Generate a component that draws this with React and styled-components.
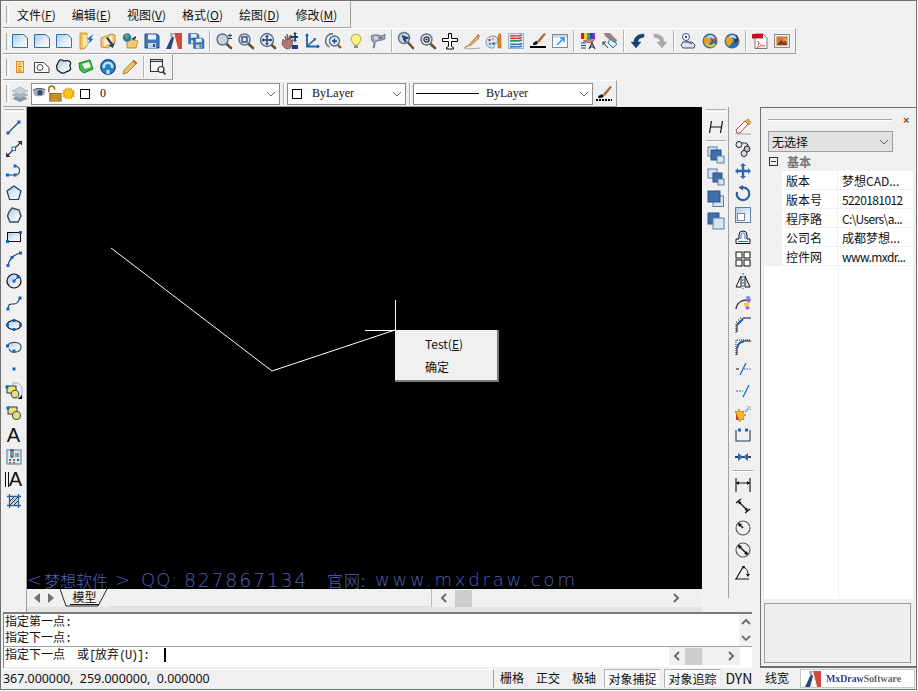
import React from 'react';
import styled, { createGlobalStyle } from 'styled-components';

const Global = createGlobalStyle`
  html, body { margin: 0; padding: 0; background: #fff; overflow: hidden; }
  * { box-sizing: border-box; }
`;
const UI = `"Noto Sans CJK SC", "Noto Sans", sans-serif`;

const Page = styled.div`
  width: 917px; height: 690px; display: flex; flex-direction: column;
  background: #f0f0f0; border: 1px solid #6f6f6f;
  font: 12px/1 ${UI}; color: #111; overflow: hidden;
`;
const Toolbar = styled.div`
  display: flex; align-items: center; width: ${p => p.$w}px; height: ${p => p.$h || 26}px;
  margin-left: 2px; padding-left: 3px;
  border-right: 1px solid #a0a0a0; border-bottom: 1px solid #a0a0a0;
  border-top: 1px solid #fff; flex: none;
`;
const Grip = styled.i`
  width: 3px; height: 17px; flex: none;
  border-left: 1px solid #a8a8a8; border-right: 1px solid #fff;
`;
const MenuItem = styled.span`
  font-size: 12px; margin-right: 16px; white-space: nowrap; &:first-of-type { margin-left: 8px; }
`;
const Btn = styled.span`
  width: 22px; height: 22px; display: flex; align-items: center; justify-content: center; flex: none;
`;
const Sep = styled.i`
  width: 2px; height: 22px; margin: 0 2px; flex: none;
  border-left: 1px solid #b4b4b4; border-right: 1px solid #fff;
`;
const ComboSep = styled(Sep)`margin: 0 2px 0 3px;`;
const Svg = styled.svg`
  width: ${p => p.$s || 16}px; height: ${p => p.$s || 16}px; display: block; overflow: visible; flex: none;
`;
const Combo = styled.div`
  width: ${p => p.$w}px; height: 22px; flex: none; display: flex; align-items: center; position: relative;
  background: #fff; border: 1px solid #8c8c8c; padding-left: 1px;
`;
const Swatch = styled.i`
  width: 10px; height: 10px; border: 1px solid #000; background: #fff; flex: none;
  margin: 0 ${p => p.$mr || 0}px 0 ${p => p.$ml || 0}px;
`;
const MonoText = styled.span`
  font: 12px "Liberation Serif", serif; color: #111;
`;
const LineSample = styled.i`width: 63px; height: 1px; background: #000; margin: 0 7px 0 1px; flex: none;`;
const ComboArrow = styled.span`position: absolute; right: 3px; top: 5px; display: flex;`;

const Body = styled.div`flex: 1; display: flex; min-height: 0;`;
const Work = styled.div`width: 757px; display: flex; flex-direction: column; flex: none;`;
const Dock = styled.div`flex: 1; display: flex; min-height: 0;`;
const LeftBar = styled.div`width: 26px; flex: none; display: flex; flex-direction: column; align-items: center; padding-top: 2px; border-right: 1px solid #a0a0a0;`;
const HGrip = styled.i`width: 20px; height: 3px; flex: none; margin-bottom: 4px; border-top: 1px solid #b0b0b0; border-bottom: 1px solid #fff;`;
const CanvasCol = styled.div`width: 675px; flex: none; display: flex; flex-direction: column;`;
const Canvas = styled.div`flex: 1; background: #000; position: relative;`;
const Draw = styled.svg`position: absolute; inset: 0; width: 100%; height: 100%;`;
const CtxMenu = styled.div`
  position: absolute; left: 368px; top: 223px; width: 104px; height: 52px; background: #f0f0f0;
  border-right: 2px solid #777; border-bottom: 2px solid #777;
  display: flex; flex-direction: column; padding: 5px 0 0 30px; gap: 5px;
`;
const CtxItem = styled.div`height: 18px; line-height: 18px; font-size: 12px;`;
const Watermark = styled.div`
  position: absolute; left: 0; bottom: 0; display: flex; color: #5060b4; height: 20px; padding-top: 2px; line-height: 18px;
  font-family: "DejaVu Sans", "Noto Sans CJK SC", sans-serif; font-weight: 200; white-space: nowrap;
`;
const WmPart = styled.span`
  width: ${p => p.$w}px; flex: none; font-size: ${p => p.$fs || 18}px; letter-spacing: ${p => p.$sp || 0}px; line-height: 18px;
  ${p => p.$cjk ? `font-family: "Noto Sans CJK SC", sans-serif; font-weight: 300;` : ''}
`;
const TabBar = styled.div`height: 18px; flex: none; display: flex; align-items: center; position: relative; background: #f0f0f0;`;
const Arrows = styled.div`display: flex; width: 33px; padding-left: 3px; flex: none;`;
const Arrow = styled.span`width: ${p => p.$w || 14}px; height: 16px; display: flex; align-items: center; justify-content: center; flex: none;`;
const Tab = styled.div`width: 49px; height: 18px; flex: none; display: flex; align-items: center; justify-content: center; position: relative;`;
const TabLabel = styled.span`font-size: 12px; border-bottom: 1px solid #111; line-height: 14px; margin-top: -1px; padding: 0 2px;`;
const TabSvg = styled.svg`position: absolute; inset: 0; width: 49px; height: 18px;`;
const HSpace = styled.div`width: 323px; height: 18px; flex: none; border-right: 1px solid #bbb; border-bottom: 1px solid #ddd;`;
const ScrollTrack = styled.div`flex: 1; display: flex; align-items: center; height: 18px;`;
const Thumb = styled.i`width: ${p => p.$w}px; height: 17px; background: #cdcdcd; flex: none;`;
const Grow = styled.i`flex: 1;`;
const Strip = styled.div`height: 5px; flex: none; background: #e3e3e3;`;
const RightDock = styled.div`width: 55px; flex: none; display: flex; border-left: 1px solid #f8f8f8;`;
const DockA = styled.div`width: 26px; flex: none; display: flex; flex-direction: column; align-items: center; padding-top: 2px; border-right: 1px solid #a0a0a0; margin-bottom: 14px;`;
const DockB = styled.div`flex: 1; display: flex; flex-direction: column; align-items: center; padding: 9px 0 0 0; margin-bottom: 14px;`;
const DockSep = styled.i`width: 20px; height: 2px; flex: none; margin: ${p => p.$m}; border-top: 1px solid #a8a8a8; border-bottom: 1px solid #fff;`;

const Cmd = styled.div`
  height: 56px; flex: none; margin-left: 2px; border-top: 2px solid #7a7a7a; border-left: 1px solid #888; background: #fff;
  display: flex; flex-direction: column; margin-right: 6px;
`;
const CmdTop = styled.div`height: 33px; display: flex; border-bottom: 1px solid #a0a0a0; flex: none;`;
const CmdLines = styled.div`flex: 1; padding-left: 1px; display: flex; flex-direction: column;`;
const CmdLine = styled.div`height: 16px; line-height: 14px; font-size: 12px; white-space: nowrap;`;
const CmdBar = styled.div`width: 13px; flex: none; background: #f0f0f0; display: flex; flex-direction: column; align-items: center;`;
const CmdBottom = styled.div`flex: 1; display: flex; min-height: 0;`;
const CmdInput = styled.div`flex: 1; display: flex; align-items: center; padding: 0 0 5px 1px; border-bottom: 1px solid #eee;`;
const Caret = styled.i`width: 2px; height: 14px; background: #000; margin-left: 15px; flex: none;`;
const Latin = styled.span`font: 12px "Liberation Mono", monospace; letter-spacing: -1.2px;`;
const CmdHScroll = styled.div`width: 71px; height: 18px; background: #f0f0f0; display: flex; align-items: center; flex: none;`;
const CmdCorner = styled.i`width: 12px; flex: none; background: #fff;`;

const Panel = styled.div`
  flex: 1; margin-left: 2px; border-left: 1px solid #6f6f6f; border-bottom: 2px solid #6f6f6f; border-top: 1px solid #6f6f6f;
  display: flex; flex-direction: column; padding: 0 5px 3px 3px; background: #f0f0f0;
`;
const PanelHead = styled.div`height: 23px; flex: none; display: flex; align-items: center; padding-left: 4px;`;
const PanelGrip = styled.i`width: 124px; height: 2px; border-top: 1px solid #a8a8a8; border-bottom: 1px solid #fff;`;
const Close = styled.span`margin-left: 11px; font: bold 11px "Liberation Sans", sans-serif; color: #7a5230;`;
const Select = styled.div`
  height: 21px; width: 125px; margin-left: 4px; flex: none; background: #e1e1e1; border: 1px solid #a0a0a0;
  display: flex; align-items: center; justify-content: space-between; padding: 0 3px; font-size: 12px;
`;
const Grid = styled.div`flex: 1; display: flex; flex-direction: column; background: #fff; margin-right: -2px;`;
const GroupRow = styled.div`height: 19px; flex: none; background: #f0f0f0; display: flex; align-items: center; padding-left: 5px;`;
const Minus = styled.i`width: 9px; height: 9px; border: 1px solid #333; margin-right: 9px; flex: none; position: relative;
  &::after { content: ''; position: absolute; left: 1px; right: 1px; top: 3px; height: 1px; background: #333; }
`;
const GroupLabel = styled.span`font-weight: 700; color: #767676; font-size: 12px;`;
const Row = styled.div`display: grid; grid-template-columns: 18px 56px 1fr; height: 19px; flex: none; border-bottom: 1px solid #f0f0f0; align-items: center;`;
const RowGutter = styled.i`height: 19px; background: #f0f0f0;`;
const Key = styled.span`padding-left: 4px; font-size: 12px; border-right: 1px solid #f0f0f0; height: 18px; line-height: 18px;`;
const Val = styled.span`padding-left: 4px; font-size: 12px; white-space: nowrap; line-height: 18px; letter-spacing: ${p => p.$tight ? -0.6 : 0}px;`;
const GridRest = styled.div`flex: 1; margin-left: 74px; border-left: 1px solid #f0f0f0;`;
const Desc = styled.div`height: 60px; flex: none; margin-top: 4px; background: #eee; border: 1px solid #9c9c9c;`;

const Status = styled.div`height: 21px; flex: none; display: flex; align-items: center; padding-left: 2px; font-size: 12px;`;
const Coord = styled.div`width: 491px; flex: none; height: 19px; font: 12.4px/18px "Noto Sans", sans-serif; border-right: 1px solid #a8a8a8; border-top: 1px solid #fff; white-space: pre;`;
const SItem = styled.div`
  width: ${p => p.$w}px; height: 19px; flex: none; margin-left: ${p => p.$ml || 0}px; line-height: 18px; text-align: center; white-space: nowrap; font-size: ${p => p.$fs || 12}px;
  ${p => p.$on ? `background: #f8f8f8; border: 1px solid #b4b4b4; border-right-color: #e8e8e8; border-bottom-color:#e8e8e8;` : ''}
`;
const Logo = styled.div`
  width: 115px; height: 19px; margin-left: 3px; flex: none; background: #fff; border: 1px solid #c8c8c8;
  display: flex; align-items: center; padding-left: 4px; gap: 5px;
`;
const LogoText = styled.span`font: bold 10px "Liberation Serif", serif; color: #2c3c8c; white-space: nowrap; letter-spacing: -.1px; filter: blur(.3px);`;
const LogoGray = styled.span`color: #666;`;
const BigA = styled.span`font: 20px/1 "Liberation Sans", sans-serif; color: #111;`;
const Bars = styled.i`width: 4px; height: 15px; flex: none; border-left: 1px solid #111; border-right: 1px solid #111;`;

/* ---------- drawings ---------- */
const Defs = styled.svg`position: absolute; width: 0; height: 0;`;
const BL = '#1b5fae', NV = '#1d3f73';
const D = ({ x, y }) => <rect x={x - 1.5} y={y - 1.5} width="3" height="3" fill="#1763c4" />;
const Mag = ({ children, c = 6.5, cy = 6.5, r = 5.5, fill = '#dfe6ee' }) => (
  <>
    <path d={`M${c + 3.6} ${cy + 4}L15 15`} stroke="#6b4f2a" strokeWidth="2.6" strokeLinecap="round" />
    <circle cx={c} cy={cy} r={r} fill={fill} stroke="#5a6f8a" strokeWidth="1.4" />
    {children}
  </>
);
const Floppy = ({ x = 0, y = 0, s = 1 }) => (
  <g transform={`translate(${x} ${y}) scale(${s})`}>
    <path d="M1 1h12l2 2v12H1z" fill="#3f79b8" stroke="#1d4f8c" />
    <rect x="4" y="1.5" width="8" height="5" fill="#e9f1f8" />
    <rect x="4" y="10" width="8" height="5" fill="#c9d6e3" />
    <rect x="9" y="11" width="2" height="3" fill="#1d4f8c" />
  </g>
);
const Globe = ({ rev }) => (
  <>
    <circle cx="8" cy="8" r="7.5" fill="#2b6cad" />
    <path d="M2 5c3-3 6-1 7 1s-2 6-4 7-4-5-3-8z" fill="#e3a21f" />
    <path d="M10 2c3 1 5 4 5 7l-3-1-2-4z" fill="#d34a2a" />
    <path d={rev ? 'M13 2 8 5l3 1v4l3-2z' : 'M3 9c2 3 6 4 9 1l2 2-4 2.500-5-1z'} fill={rev ? '#16355f' : '#e8c33c'} />
    <path d="M5 3c3-2 6-1 8 2l-2 1c-2-2-4-2-5 0z" fill="#bcd6ea" />
  </>
);
const ICONS = {
  doc: <path d="M.5 1.500h11l4 3.500v9.500H.5z" fill="url(#docG)" stroke="#2f6fae" />,
  folder: <><path d="M2 0h7v13l-3 3H2z" fill="#f0c45a" stroke="#b98a2a" strokeWidth=".8" /><path d="M5 2h4v10l-4 3z" fill="#fae6a8" /><path d="M15.500 1 9 6l2.500 1L10 11l5.500-5L13 5.500z" fill="#1a74c4" /></>,
  folderOpen: <><path d="M1 14V5l10-4 4 1v8l-7 5z" fill="#f1cc74" stroke="#a98028" strokeWidth=".8" /><path d="M4 6l8-3v6l-8 4z" fill="#fbedc0" /><path d="M6 5l5 7-3 0 5 3 2-6-2 2-5-7z" fill="#1b3f75" /></>,
  globeFolder: <><path d="M5 7h9l2 1-2 7H5z" fill="#efcc72" stroke="#a98028" strokeWidth=".8" /><circle cx="5" cy="4.500" r="4.200" fill="#2b78ad" /><path d="M2 3l3-2 2 2-2 3z" fill="#6aa84a" /><path d="M9 6l5-3v2l-2 2z" fill="#24456f" /></>,
  save: <Floppy />,
  mx: <><path d="M8 0h8v16h-4z" fill="#d4483f" /><path d="M8 0l4 16H6z" fill="#f2e6e6" opacity=".9" /><path d="M0 16 6 3l2 2-3 11z" fill="#2c4780" /><path d="M4 0h4l-3 6z" fill="#9fa9bc" /><path d="M8 5l3 11H8z" fill="#fff" /></>,
  saveAll: <><Floppy x="0" y="0" s=".72" /><Floppy x="5" y="4.500" s=".72" /></>,
  zoomPM: <Mag fill="#c8d4e2"><path d="M12 2.500h4M14 .5v4M12 5.500h4" stroke={NV} strokeWidth="1" fill="none" /></Mag>,
  zoomBox: <Mag><rect x="4" y="4" width="5" height="5" fill="none" stroke={NV} strokeWidth="1.300" /></Mag>,
  zoomPan: <Mag c={7} cy={7} r={6.500}><path d="M7 2.500v9M2.500 7h9" stroke={NV} strokeWidth="1.300" /><path d="M7 1.500 5.300 4h3.400zM7 12.500 5.300 10h3.400zM1.500 7 4 5.300v3.400zM12.500 7 10 5.300v3.400z" fill={NV} /></Mag>,
  hand: <><path d="M1 6l3 3-1-6 2 4 0-6 2 6 1-5 1 6 2-2-1 6c0 3-3 4-5 4s-4-3-5-5z" fill="#b07a74" stroke="#6c4340" strokeWidth=".7" /><path d="M13 0l-2 2h1.200v2H10v-1L8 5l2 2V6h2.200v2H11l2 2 2-2h-1V6h2V4h-2V2h1z" fill={NV} transform="translate(0 -1)" /><path d="M10 12h6v4h-6z" fill={NV} /></>,
  axes: <><path d="M3 1v12.500h12" stroke={BL} strokeWidth="1.800" fill="none" /><path d="M3 13.500 11 6" stroke={BL} strokeWidth="1.500" /><path d="M3 0 1 3h4zM16 13.500 13 11.500v4zM12 5l-3 .5 2.500 2.500z" fill={BL} /></>,
  orbit: <><path d="M7 .8A7 7 0 0 0 3.500 14" stroke="#5c6b7c" strokeWidth="1.500" fill="none" /><circle cx="8.500" cy="8" r="5" fill="#dbe5f0" stroke="#4d6c94" strokeWidth="1.300" /><path d="M8.500 5.500v5M6 8h5" stroke={NV} strokeWidth="1.300" /><path d="M12 12l3 3" stroke="#6b4f2a" strokeWidth="2" /></>,
  bulb: <><path d="M8 1a5 5 0 0 0-3 9l1 2h4l1-2a5 5 0 0 0-3-9z" fill="#fbf08a" stroke="#b7a83c" /><rect x="6" y="12.500" width="4" height="2.500" fill="#7f8ba0" /></>,
  tool: <><path d="M1 3c3-2 8-1 11 0l3-2v5l-3 1-5 1-2 2v2l-1 3H3l1-5-2-2z" fill="#9aa4b4" stroke="#5a6678" strokeWidth=".7" /><circle cx="6" cy="5" r="2" fill="#cfd8e4" /><path d="M9 5h3" stroke="#7a3a3a" /></>,
  zoomArrow: <Mag c={6} cy={5} fill="#c9d4e0"><path d="M4 3l5 2-3 1 2 3" stroke={NV} strokeWidth="2" fill="none" /></Mag>,
  zoomEye: <Mag><circle cx="6.500" cy="6.500" r="2.600" fill="none" stroke="#333" strokeWidth="1.300" /><circle cx="6.500" cy="6.500" r="1" fill="#111" /></Mag>,
  plane: <path d="M6.500.5h3v5h6v3h-6v5l2 1v1.500h-7V14.500l2-1v-5h-6v-3h6z" fill="#fff" stroke="#000" />,
  pen: <><path d="M0 15c4 1 11 1 16 0" stroke="#a8a8a8" fill="none" /><path d="M1 15c1-2 1-3 2-1l10-11 2 2L6 13" fill="#eeb84e" stroke="#8a5a1a" strokeWidth=".7" /><path d="M13 2l1-1 2 2-1 1z" fill="#c7553c" /></>,
  palette: <><path d="M0 9c0-4 4-6 7-6s5 2 5 5-2 1-3 3 0 4-3 4-6-2-6-6z" fill="#dce8f2" stroke="#6c8cb0" /><circle cx="3.500" cy="7" r="1.300" fill="#d33" /><circle cx="7" cy="6" r="1.300" fill="#e8b020" /><circle cx="4" cy="11" r="1.300" fill="#3a7" /><circle cx="7.500" cy="10.500" r="1.300" fill="#26b" /><path d="M12 15V3l2-3 1 3v12z" fill="#e08a28" stroke="#8b5a18" strokeWidth=".5" /></>,
  colors: <><rect x=".5" y=".5" width="15" height="15" fill="#e4eef6" stroke="#9cb4ca" /><path d="M2 3c4-1 7 1 12-1M2 5.500c4-1 7 1 12-1" stroke="#d63a3a" strokeWidth="1.400" fill="none" /><path d="M2 8c4-1 7 1 12-1" stroke="#2f9a48" strokeWidth="1.800" fill="none" /><path d="M2 11.500c4-1 7 1 12-1M2 14c4-1 7 1 12-1" stroke="#2a6ed0" strokeWidth="1.400" fill="none" /></>,
  brush: <><path d="M0 13h16v2H0z" fill="#000" /><path d="M3 12c0-3 2-4 4-4l1 2c-1 2-3 2-5 2z" fill="#111" /><path d="M7 8l7-8 2 1-7 9z" fill="#a5714a" /></>,
  window: <><rect x=".5" y="1.500" width="15" height="13" fill="#f6f8fa" stroke="#808a94" /><rect x="1" y="2" width="14" height="2.500" fill="#ccd6e0" /><path d="M5 12l7-7M8 5h4v4" stroke="#2a9ae8" strokeWidth="1.500" fill="none" /></>,
  rainbow: <><rect x="1" y="0" width="3" height="6" fill="#e01818" /><rect x="4" y="0" width="3" height="6" fill="#e8d020" /><rect x="7" y="0" width="3" height="6" fill="#30b040" /><rect x="10" y="0" width="3" height="6" fill="#2040d8" /><rect x="13" y="0" width="2" height="6" fill="#c020c0" /><path d="M3 8l6-2 6-1-2 4-4 1z" fill="#b48a80" stroke="#704" strokeWidth=".4" /><path d="M1 10h5M1 12.500h5M1 15h5" stroke={NV} strokeWidth="1.200" /><path d="M9 16l3-6 3 6M10 14h4" stroke="#223" strokeWidth="1.100" fill="none" /></>,
  tag: <><path d="M2 0h6l7 7-1 3-4-1-7-6z" fill="#9d7f7c" /><path d="M8 6l7 5-4 4-5-5z" fill="#dff0fa" stroke="#2a76b8" /><path d="M1 9l5 6M1 9v3M1 9h3" stroke="#333" fill="none" /></>,
  undo: <path d="M14 1C8 1 4 4 4 9H1l5 6 5-6H8c0-3 2-4 6-5z" fill="#19406f" stroke="#19406f" strokeWidth=".5" />,
  redo: <path d="M2 1c6 0 10 3 10 8h3l-5 6-5-6h3c0-3-2-4-6-5z" fill="#a8a8a8" stroke="#a8a8a8" strokeWidth=".5" />,
  printer: <><path d="M3 9 1 12l2 3h11l1-3-3-3z" fill="#dfe4ee" stroke="#3c4a78" /><circle cx="6" cy="4" r="3.500" fill="#fff" stroke="#3c4a78" /><circle cx="6" cy="4" r="1.200" fill="#3c4a78" /><path d="M6 8l6 3" stroke="#3c4a78" /></>,
  globeA: <Globe />,
  globeB: <Globe rev />,
  pdf: <><path d="M3 1h8l4 4v10.500H3z" fill="#fff" stroke="#555" strokeWidth=".8" /><rect x="0" y="1" width="11" height="4.500" fill="#c8101e" /><path d="M6 8c1 3 3 5 7 5-3-1-5 0-8 2 2-3 2-5 1-7z" fill="none" stroke="#ee4a4a" strokeWidth=".8" /></>,
  image: <><rect x=".5" y="1.500" width="15" height="13" fill="#ececec" stroke="#8a8a8a" /><rect x="2.500" y="3.500" width="11" height="9" fill="#cf7a3a" /><path d="M3 12l4-5 3 3 2-3 1 5z" fill="#8c3a1a" /><path d="M9 4l4 3v2z" fill="#f0d070" /></>,
  note: <><rect x="4.500" y="2.500" width="7" height="11" fill="#fbe48a" stroke="#e08a1a" /><path d="M6 5h3M6 7.500h4M6 10h3M6 12h4" stroke="#d0741a" /></>,
  shape: <><path d="M.5 3.500h9l5.500 5v5H.5z" fill="#fff" stroke="#444" /><circle cx="6" cy="8.500" r="3" fill="#fff" stroke="#444" /></>,
  cloud: <path d="M4 1c2-1 3 1 4 1s3-1 5 0 2 3 1 4 2 3 0 5-3 1-4 2-4 2-6 0-3-1-3-3-1-3 0-4S2 2 4 1z" fill="url(#docG)" stroke="#111" strokeWidth="1.200" />,
  bubble: <><path d="M1 4 12 1l3 9-9 4-4-3z" fill="#45b94a" stroke="#1f7f30" /><path d="M4 5l7-2 2 5-6 2z" fill="#e8f8e0" /></>,
  ring: <><circle cx="8" cy="8" r="7.300" fill="#2a80c8" stroke="#14477c" strokeWidth="1.200" /><path d="M2.500 8a5.500 5.500 0 0 1 11 0v1h-4v6h-3V9H2.500z" fill="#bfe2f6" /><circle cx="8" cy="8" r="3" fill="#2a80c8" /></>,
  pencil: <><path d="M1 15l1-4L12 1l3 3L5 14z" fill="#f0c060" stroke="#8a6a2a" strokeWidth=".7" /><path d="M12 1l3 3-1.500 1.500-3-3z" fill="#d06a4a" /></>,
  viewMag: <><rect x=".5" y=".5" width="12" height="12" fill="#f4f4f4" stroke="#333" /><rect x=".5" y=".5" width="12" height="2" fill="#ccc" stroke="#333" /><circle cx="11" cy="10.500" r="3" fill="#fff" stroke="#222" strokeWidth="1.200" /><path d="M13 13l2.500 2.500" stroke="#222" strokeWidth="1.600" /></>,
  layers: <><path d="M8 9l8 3.500L8 16 0 12.500z" fill="#8397ad" /><path d="M8 5.500l8 3.500-8 3.500L0 9z" fill="#a6b6c6" stroke="#78889a" strokeWidth=".4" /><path d="M8 1l8 4-8 4-8-4z" fill="#c8d2dc" stroke="#78889a" strokeWidth=".4" /></>,
  eye: <><path d="M0 4c4-3 8-3 14-1l-1 6c-4 2-9 2-12 0z" fill="#a0acb8" /><circle cx="8" cy="6.500" r="3" fill="#3a4a60" /><path d="M0 4c4-3 8-3 14-1" stroke="#334" fill="none" /></>,
  lock: <><path d="M2 7V3a3 3 0 0 1 6 0v1" stroke="#a06a14" strokeWidth="1.600" fill="none" /><rect x="3" y="8" width="12" height="8" fill="#d8a030" stroke="#8a5a10" /><path d="M3 10.500h12M3 13h12" stroke="#a87a20" /></>,
  sun: <><path d="M8 0l1.500 2.500L12 1l.5 3L15.500 4l-1 2.500L16 8l-1.500 1.500 1 2.500-3 .5L12 15l-2.500-1.500L8 16l-1.500-2.500L4 15l-.5-2.500-3-.5 1-2.500L0 8l1.500-1.500-1-2.500 3-.5L4 1l2.500 1.500z" fill="#f0a818" /><circle cx="8" cy="8" r="4.500" fill="#f8c81a" /></>,
  brushDot: <><path d="M0 14h16" stroke="#000" strokeWidth="2" strokeDasharray="2 1" /><path d="M2 12c0-3 3-3 4-4l2 2c-1 2-4 2-6 2z" fill="#111" /><path d="M7 8l7-8 2 1-7 9z" fill="#a5714a" /></>,
  line: <><path d="M2 14 13 3" stroke="#1d3f66" strokeWidth="1.100" /><D x={2} y={14} /><D x={13} y={3} /></>,
  ray: <><path d="M1 15 15 1" stroke="#333" strokeWidth="1.100" /><path d="M0 16v-4.500L4.500 16zM16 0v4.500L11.500 0z" fill="#333" /><rect x="6" y="6" width="3.500" height="3.500" fill="#fff" stroke="#1763c4" /></>,
  pline: <><path d="M1 12h8c6 0 6-9 0-9" stroke="#1d3f66" fill="none" strokeWidth="1.100" /><D x={1.500} y={12} /><D x={9} y={12} /><D x={9} y={3} /></>,
  polygon: <path d="M8 1l7 5-2.500 8.500h-9L1 6z" fill="url(#docG)" stroke="#1d3f66" strokeWidth="1.200" />,
  polygon2: <path d="M6 1l7 2 2 6-3 6H4L1.500 9 3 5z" fill="url(#docG)" stroke="#3a4a5a" strokeWidth="1.400" />,
  rect: <><rect x="1.500" y="3.500" width="13" height="9" fill="url(#docG)" stroke="#111" /><D x={1.500} y={12.500} /><D x={14.500} y={3.500} /></>,
  arc: <><path d="M2 15C3 8 8 3 15 2" stroke="#1d3f66" fill="none" strokeWidth="1.100" /><D x={2} y={14.500} /><D x={6} y={6.500} /><D x={14.500} y={2} /></>,
  circle: <><circle cx="8" cy="8" r="7" fill="url(#docG)" stroke="#111" strokeWidth="1.200" /><path d="M8 8l4-4" stroke="#1d3f66" /><D x={8} y={8} /><D x={12} y={4} /></>,
  spline: <><path d="M2 14c0-6 3-5 6-5s4-2 6-6" stroke="#1d3f66" fill="none" strokeWidth="1.100" /><D x={2} y={14} /><D x={14} y={3} /></>,
  ellipse: <><ellipse cx="8" cy="8" rx="7" ry="4.500" fill="url(#docG)" stroke="#111" strokeWidth="1.200" /><D x={1.500} y={8} /><D x={14.500} y={8} /><D x={8} y={3.500} /><D x={8} y={12.500} /></>,
  ellArc: <><path d="M1 7c3-5 14-5 14 1s-10 7-12 2" fill="url(#docG)" stroke="#555" strokeWidth="1.200" /><D x={1.500} y={7} /><D x={8} y={12} /></>,
  point: <D x={8} y={8} />,
  insert: <><path d="M7 0h5l4 4v11H7z" fill="#e6eef6" stroke="#8a9ab0" strokeWidth=".7" /><rect x="1" y="3" width="9" height="7" fill="#f3e26a" stroke="#1d3f66" /><circle cx="9" cy="11" r="3.800" fill="#e5da90" stroke="#46583a" strokeWidth="1.100" /><path d="M12 16l4-4v4z" fill="#000" /><D x={1} y={4} /></>,
  block: <><rect x="2" y="2" width="9" height="7" fill="#f3e26a" stroke="#1d3f66" /><circle cx="10.500" cy="10.500" r="4" fill="#e5da90" stroke="#46583a" strokeWidth="1.100" /><D x={2} y={3} /></>,
  hatchTable: <><rect x="1" y="1" width="14" height="14" fill="#dce7f2" stroke="#4f78a8" /><rect x="5" y="1" width="2" height="7" fill="none" stroke="#333" /><rect x="3" y="10" width="2" height="2" fill="#d33" /><rect x="7" y="10" width="2" height="2" fill="#2a5" /><rect x="11" y="10" width="2" height="2" fill="#26b" /><rect x="3" y="13" width="2" height="1.500" fill="#2a5" /><rect x="7" y="13" width="2" height="1.500" fill="#d33" /><rect x="9" y="4" width="4" height="4" fill="#999" /></>,
  hatch: <><path d="M1 3.500h14M1 12.500h14M3.500 1v14M12.500 1v14" stroke="#2a6298" strokeWidth="1.300" /><rect x="4" y="4" width="8" height="8" fill="#bcd0e4" /><path d="M4 8l4-4M4 12l8-8M8 12l4-4" stroke="#333" strokeWidth="1" /></>,
  dimH: <path d="M3.500 2 1.500 14M14.500 2l-2 12M2.500 8h11" stroke="#111" strokeWidth="1.200" />,
  front: <><rect x="0" y="0" width="9" height="9" fill="#d8e4f0" stroke="#5a7ea6" /><rect x="3" y="3" width="10" height="10" fill="#3f6ea8" stroke="#2d5488" /><rect x="9" y="9" width="7" height="7" fill="#d8e4f0" stroke="#5a7ea6" /></>,
  back: <><rect x="0" y="0" width="9" height="9" fill="#d8e4f0" stroke="#5a7ea6" /><rect x="5" y="4" width="9" height="9" fill="#3f6ea8" stroke="#2d5488" /><rect x="10" y="10" width="6" height="6" fill="#d8e4f0" stroke="#5a7ea6" /></>,
  fore: <><rect x="5" y="5" width="10.500" height="10.500" fill="#d8e4f0" stroke="#5a7ea6" /><rect x="0" y="0" width="12" height="11" fill="#3f6ea8" stroke="#2d5488" /></>,
  rear: <><rect x="0" y="0" width="11" height="11" fill="#3f6ea8" stroke="#2d5488" /><rect x="5" y="5" width="11" height="11" fill="#d8e4f0" stroke="#5a7ea6" /></>,
  erase: <><path d="M0 15h16" stroke="#a8a8a8" /><path d="M2 14l-1-3 9-9 3 3-8 9z" fill="#fff" stroke="#c43a3a" /><path d="M10 2l3-2 3 3-2 3z" fill="#e6b040" stroke="#8a6a2a" strokeWidth=".5" /></>,
  copy: <><circle cx="4" cy="3.500" r="3" fill="#e6eaf0" stroke="#222" /><circle cx="12" cy="8" r="3" fill="#b8c0c8" stroke="#222" /><circle cx="9" cy="12.500" r="3" fill="#d8dde2" stroke="#222" /><path d="M7 2h4l2 2-1 1" stroke={NV} strokeWidth="1.200" fill="none" /></>,
  move: <path d="M8 0l3 3H9.200v3.800H13V5l3 3-3 3V9.200H9.200V13H11l-3 3-3-3h1.800V9.200H3V11L0 8l3-3v1.800h3.800V3H5z" fill="#2e6aa8" />,
  rotate: <><path d="M8 2.500a6.300 6.300 0 1 1-6 4.500" stroke="#2b5f98" strokeWidth="2.200" fill="none" /><path d="M8 0v5.500L3.500 2.500z" fill="#2b5f98" /></>,
  scale: <><rect x=".5" y=".5" width="15" height="15" fill="url(#docG)" stroke="#5a7ea6" /><rect x="2.500" y="6.500" width="7" height="7" fill="#fff" stroke="#111" strokeDasharray="1 1" /></>,
  offset: <><path d="M1 14.500V10h3V6a4 4 0 0 1 8 0v4h3v4.500z" fill="#fff" stroke="#111" /><path d="M3 12.500h10M6 10V6a2 2 0 0 1 4 0v4" stroke="#2a6ed0" fill="none" /></>,
  array: <><rect x="1" y="1" width="6" height="6" fill="#fff" stroke="#111" /><rect x="9" y="1" width="6" height="6" fill="#fff" stroke="#111" /><rect x="1" y="9" width="6" height="6" fill="#fff" stroke="#111" /><rect x="9" y="9" width="6" height="6" fill="#fff" stroke="#111" /></>,
  mirror: <><path d="M8 0v16" stroke="#1763c4" strokeDasharray="2 1" /><path d="M6 3v11H1z" fill="#fff" stroke="#111" /><path d="M10 3v11h5z" fill="#dfe8f2" stroke="#111" /></>,
  stretch: <><path d="M1 14c1-8 7-9 13-9" stroke="#333" strokeWidth="1.300" fill="none" /><path d="M11 6l3 2 2-3-2-4-2 3zM10 12l3-1 2 2-3 2z" fill="#c050d0" /><circle cx="13" cy="3" r="2" fill="#5aa0e0" /><rect x="9" y="8" width="5" height="3" fill="#e8d040" /></>,
  chamfer: <><path d="M1 16V6M1 5h1M3 3h1M5 1h1" stroke="#111" strokeDasharray="1 1" /><path d="M2 15V7l6-6h8" stroke="#111" fill="none" /><path d="M2 8 8 2" stroke="#1763c4" strokeWidth="1.800" /></>,
  fillet: <><path d="M1 16V1h15" stroke="#111" strokeDasharray="1 1" fill="none" /><path d="M2 16V9a7 7 0 0 1 7-7h7" stroke="#111" fill="none" /><path d="M2.500 9a6.500 6.500 0 0 1 6.500-6.500" stroke="#1763c4" strokeWidth="1.800" fill="none" /></>,
  trim: <><path d="M1 8h3" stroke="#111" /><path d="M5 14 11 2" stroke="#1763c4" strokeWidth="1.300" /><path d="M9 8h7" stroke="#1763c4" strokeDasharray="1.500 1" /></>,
  extend: <><path d="M1 8h7" stroke="#1763c4" strokeDasharray="2 1" /><path d="M8 14 14 2" stroke="#1763c4" strokeWidth="1.300" /></>,
  explode: <><rect x="1" y="8" width="5" height="7" fill="#d83030" /><path d="M0 6l3 1 1-3 2 3 3-1-1 3 3 1-3 2 1 3-3-1-1 3-2-4z" fill="#f0c020" stroke="#c04010" strokeWidth=".5" /><path d="M9 6l6-5 1 1-5 6z" fill="#9ac0e6" /><path d="M12 1l1 1M15 4l1 1" stroke="#888" /></>,
  breakPts: <><path d="M1 3v11h14V3" stroke="#1d3f66" fill="none" strokeWidth="1.100" /><rect x="3" y="1.500" width="3" height="3" fill="#1763c4" /><rect x="10" y="1.500" width="3" height="3" fill="#1763c4" /></>,
  join: <><path d="M0 8h16" stroke="#111" strokeWidth="1.600" /><path d="M3 4l5 4-5 4zM13 4 8 8l5 4z" fill="#2a6ab0" /></>,
  dimLin: <><path d="M1 2v14M15 2v14M1 7h14" stroke="#111" strokeWidth="1.100" /><path d="M1 7l3-2v4zM15 7l-3-2v4z" fill="#111" /></>,
  dimAli: <><path d="M1 5l5-4M10 15l5-4M3 3l10 10" stroke="#111" strokeWidth="1.200" /><path d="M3 3l3.500 1-2.500 2.500zM13 13l-3.500-1 2.500-2.500z" fill="#111" /></>,
  dimRad: <><circle cx="8" cy="8" r="7" fill="none" stroke="#555" strokeWidth="1.100" /><path d="M8 8 3.500 3.500" stroke="#111" strokeWidth="1.400" /><path d="M3 3l4 1-3 3z" fill="#111" /></>,
  dimDia: <><circle cx="8" cy="8" r="7" fill="none" stroke="#555" strokeWidth="1.100" /><path d="M3.500 3.500l9 9" stroke="#111" strokeWidth="1.400" /><path d="M3 3l4 1-3 3zM13 13l-4-1 3-3z" fill="#111" /></>,
  dimAng: <><path d="M0 15h14M1 15 8 3" stroke="#111" strokeWidth="1.100" /><path d="M8 3c3 1 5 3 5 8" stroke="#111" fill="none" /><path d="M13 13l-2-3h4zM7 2l3 0-1 3z" fill="#111" /></>,
};
const Icon = ({ n, s }) => <Svg viewBox="0 0 16 16" $s={s}>{ICONS[n]}</Svg>;
const Chevron = ({ d = 'down', c = '#666', s = 10 }) => {
  const p = { down: 'M1 3l4 4 4-4', up: 'M1 7l4-4 4 4', left: 'M7 1 3 5l4 4', right: 'M3 1l4 4-4 4' }[d];
  return <svg width={s} height={s} viewBox="0 0 10 10"><path d={p} fill="none" stroke={c} strokeWidth={d === 'down' && c === '#666' ? 1 : 1.800} /></svg>;
};
const Tri = ({ left }) => (
  <svg width="8" height="10" viewBox="0 0 8 10"><path d={left ? 'M7 0v10L1 5z' : 'M1 0v10l6-5z'} fill="#707070" /></svg>
);

const ROW2 = ['doc','doc','doc','folder','folderOpen','globeFolder','save','mx','saveAll','|','zoomPM','zoomBox','zoomPan','hand','axes','orbit','bulb','tool','|','zoomArrow','zoomEye','plane','pen','palette','colors','brush','window','|','rainbow','tag','|','undo','redo','|','printer','globeA','globeB','|','pdf','image'];
const ROW3 = ['note','shape','cloud','bubble','ring','pencil','|','viewMag'];
const LEFT = ['line','ray','pline','polygon','polygon2','rect','arc','circle','spline','ellipse','ellArc','point','insert','block','A','hatchTable','IA','hatch'];
const DOCK_A = ['dimH','-','front','back','fore','rear'];
const DOCK_B = ['erase','copy','move','rotate','scale','offset','array','mirror','stretch','chamfer','fillet','trim','extend','explode','breakPts','join','-','dimLin','dimAli','dimRad','dimDia','dimAng'];
const PROPS = [['版本','梦想CAD...'],['版本号','5220181012',1],['程序路','C:\\Users\\a...',1],['公司名','成都梦想...'],['控件网','www.mxdr...',1]];
const MENUS = [['文件','F'],['编辑','E'],['视图','V'],['格式','O'],['绘图','D'],['修改','M']];

const renderTool = (n, i) => n === '|' ? <Sep key={i} /> : <Btn key={i}><Icon n={n} /></Btn>;

export default function App() {
  return (
    <Page>
      <Global />
      <Defs aria-hidden="true">
        <defs>
          <linearGradient id="docG" x1="0" y1="0" x2="1" y2="1">
            <stop offset="0" stopColor="#a9c8e4" /><stop offset=".55" stopColor="#e0ecf6" /><stop offset="1" stopColor="#fff" />
          </linearGradient>
        </defs>
      </Defs>
      <Toolbar $w={348} $h={27}>
        <Grip />
        {MENUS.map(([a, b]) => <MenuItem key={b}>{a}(<u>{b}</u>)</MenuItem>)}
      </Toolbar>
      <Toolbar $w={793} $h={26}><Grip />{ROW2.map(renderTool)}</Toolbar>
      <Toolbar $w={170} $h={26}><Grip />{ROW3.map(renderTool)}</Toolbar>
      <Toolbar $w={614} $h={27}>
        <Grip /><Btn><Icon n="layers" /></Btn>
        <Combo $w={249}>
          <Icon n="eye" s={14} /><Icon n="lock" s={15} /><Icon n="sun" s={13} />
          <Swatch $ml={5} $mr={10} />
          <MonoText>0</MonoText>
          <ComboArrow><Chevron /></ComboArrow>
        </Combo>
        <ComboSep />
        <Combo $w={119}>
          <Swatch $ml={3} $mr={10} /><MonoText>ByLayer</MonoText>
          <ComboArrow><Chevron /></ComboArrow>
        </Combo>
        <ComboSep />
        <Combo $w={180}>
          <LineSample /><MonoText>ByLayer</MonoText>
          <ComboArrow><Chevron /></ComboArrow>
        </Combo>
        <Btn><Icon n="brushDot" /></Btn>
      </Toolbar>
      <Body>
        <Work>
          <Dock>
            <LeftBar>
              <HGrip />
              {LEFT.map(n => (
                <Btn key={n}>
                  {n === 'A' ? <BigA>A</BigA> : n === 'IA' ? <><Bars /><BigA>A</BigA></> : <Icon n={n} />}
                </Btn>
              ))}
            </LeftBar>
            <CanvasCol>
              <Canvas>
                <Draw>
                  <polyline points="84,141 245,264 368,223" fill="none" stroke="#fff" />
                  <path d="M368.500 193V223M338 223.500H368" stroke="#fff" shapeRendering="crispEdges" />
                </Draw>
                <Watermark>
                  <WmPart $w={17}>&lt;</WmPart>
                  <WmPart $w={71} $cjk $fs={16}>梦想软件</WmPart>
                  <WmPart $w={26}>&gt;</WmPart>
                  <WmPart $w={43} $sp={1}>QQ:</WmPart>
                  <WmPart $w={143} $fs={19} $sp={1.700}>827867134</WmPart>
                  <WmPart $w={48} $cjk $fs={16} $sp={1}>官网:</WmPart>
                  <WmPart $w={205} $sp={2.800}>www.mxdraw.com</WmPart>
                </Watermark>
                <CtxMenu>
                  <CtxItem>Test(<u>E</u>)</CtxItem>
                  <CtxItem>确定</CtxItem>
                </CtxMenu>
              </Canvas>
              <TabBar>
                <Arrows><Arrow><Tri left /></Arrow><Arrow><Tri /></Arrow></Arrows>
                <Tab>
                  <TabSvg viewBox="0 0 49 18"><path d="M0 0l6 17h32L47 0" fill="none" stroke="#222" /></TabSvg>
                  <TabLabel>模型</TabLabel>
                </Tab>
                <HSpace />
                <ScrollTrack>
                  <Arrow $w={23}><Chevron d="left" /></Arrow>
                  <Thumb $w={17} />
                  <Grow />
                  <Arrow $w={18}><Chevron d="right" /></Arrow>
                  <Arrow $w={17} />
                </ScrollTrack>
              </TabBar>
              <Strip />
            </CanvasCol>
            <RightDock>
              <DockA>
                <HGrip />
                {DOCK_A.map((n, i) => n === '-' ? <DockSep key={i} $m="2px 0" /> : <Btn key={i}><Icon n={n} /></Btn>)}
              </DockA>
              <DockB>
                {DOCK_B.map((n, i) => n === '-' ? <DockSep key={i} $m="2px 0 1px" /> : <Btn key={i}><Icon n={n} /></Btn>)}
              </DockB>
            </RightDock>
          </Dock>
          <Cmd>
            <CmdTop>
              <CmdLines>
                <CmdLine>指定第一点<Latin>:</Latin></CmdLine>
                <CmdLine>指定下一点<Latin>:</Latin></CmdLine>
              </CmdLines>
              <CmdBar>
                <Arrow $w={13}><Chevron d="up" /></Arrow>
                <Arrow $w={13}><Chevron d="down" c="#707070" /></Arrow>
              </CmdBar>
            </CmdTop>
            <CmdBottom>
              <CmdInput>
                <CmdLine>指定下一点<Latin>&nbsp;&nbsp;</Latin>或<Latin>[</Latin>放弃<Latin>(U)]:</Latin></CmdLine>
                <Caret />
              </CmdInput>
              <CmdHScroll>
                <Arrow $w={16}><Chevron d="left" /></Arrow>
                <Thumb $w={17} />
                <Grow />
                <Arrow $w={18}><Chevron d="right" /></Arrow>
              </CmdHScroll>
              <CmdCorner />
            </CmdBottom>
          </Cmd>
        </Work>
        <Panel>
          <PanelHead>
            <PanelGrip />
            <Close>×</Close>
          </PanelHead>
          <Select>无选择<Chevron /></Select>
          <Grid>
            <GroupRow><Minus /><GroupLabel>基本</GroupLabel></GroupRow>
            {PROPS.map(([k, v, t]) => (
              <Row key={k}><RowGutter /><Key>{k}</Key><Val $tight={!!t}>{v}</Val></Row>
            ))}
            <GridRest />
          </Grid>
          <Desc />
        </Panel>
      </Body>
      <Status>
        <Coord>367.000000,  259.000000,  0.000000</Coord>
        <SItem $w={36}>栅格</SItem>
        <SItem $w={36}>正交</SItem>
        <SItem $w={36}>极轴</SItem>
        <SItem $w={57} $ml={2} $on>对象捕捉</SItem>
        <SItem $w={57} $ml={3} $on>对象追踪</SItem>
        <SItem $w={36} $fs={14}>DYN</SItem>
        <SItem $w={40}>线宽</SItem>
        <Logo>
          <Svg viewBox="0 0 16 16">{ICONS.mx}</Svg>
          <LogoText>MxDraw<LogoGray>Software</LogoGray></LogoText>
        </Logo>
      </Status>
    </Page>
  );
}
